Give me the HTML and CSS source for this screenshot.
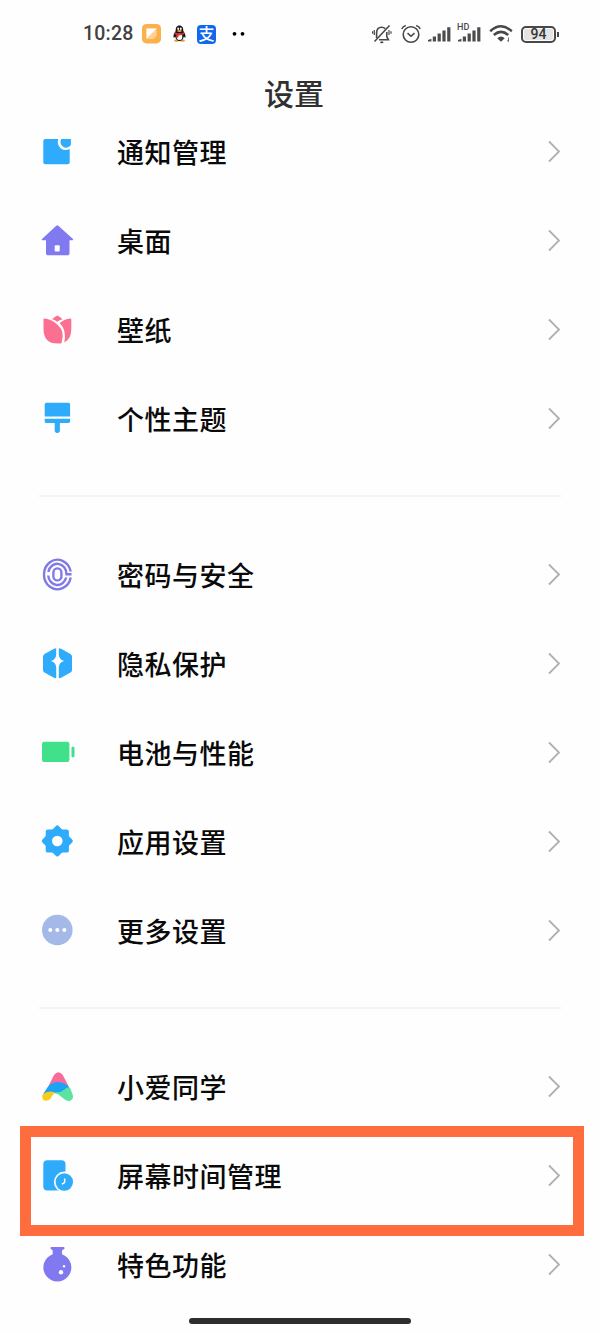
FILE: index.html
```html
<!DOCTYPE html>
<html lang="zh-CN">

<head>
    <meta charset="UTF-8">
    <title>设置</title>
    <link rel="stylesheet" href="styles.css">
</head>

<body>
    <svg width="0" height="0" class="defs">
        <symbol id="chevron" viewBox="0 0 14 23">
            <path d="M2 1.5 L12 11.5 L2 21.5" fill="none" stroke="#b0b0b0" stroke-width="1.8" />
        </symbol>
        <symbol id="bars" viewBox="0 0 23 20">
            <path d="M0 17.6v-1.6l3.4-1.2v2.8zM4.8 17.6v-5.2h3.2v5.2zM9.6 17.6v-8.2h3.2v8.2zM14.4 17.6V6.5h3.2v11.1zM19.2 17.6V3.2h3.2v14.4z" fill="#4c4c4c" />
        </symbol>
    </svg>

    <header class="status-bar">
        <span class="time">10:28</span>
        <svg class="app-note" width="19" height="20" viewBox="0 0 19 20">
            <rect width="19" height="19.4" rx="4.5" fill="#fbb04c" />
            <path d="M4.5 4.5h10v7.5l-3 3h-7z" fill="#ffd391" />
            <path d="M4.5 4.5h10L4.5 14.5z" fill="#fff" />
        </svg>
        <svg class="app-qq" width="13" height="20" viewBox="0 0 13 20">
            <ellipse cx="3.6" cy="16.6" rx="2.6" ry="1.2" fill="#e8a02c" />
            <ellipse cx="9.4" cy="16.6" rx="2.6" ry="1.2" fill="#e8a02c" />
            <path d="M6.5 1.6C3.6 1.6 2.6 4 2.7 7 1.2 9 0 11.5.6 13.8l1.6-1C2.8 15.5 4.3 17 6.5 17s3.7-1.5 4.3-4.2l1.6 1C13 11.5 11.8 9 10.3 7c.1-3-.9-5.4-3.8-5.4z" fill="#17171a" />
            <ellipse cx="6.5" cy="12.8" rx="2.8" ry="3.2" fill="#fff" />
            <ellipse cx="5.2" cy="4.7" rx=".9" ry="1.2" fill="#fff" />
            <ellipse cx="7.8" cy="4.7" rx=".9" ry="1.2" fill="#fff" />
            <ellipse cx="6.5" cy="7" rx="2.3" ry=".9" fill="#f0a030" />
            <path d="M2.2 8.2q4.3 2.8 8.6 0l.6 1.9q-3 1.5-6 1.4v2H3.5v-2.5l-1.9-.9z" fill="#e02d38" />
        </svg>
        <span class="app-pay">支</span>
        <svg class="more" width="14" height="20" viewBox="0 0 14 20">
            <circle cx="2.5" cy="9.8" r="1.9" />
            <circle cx="10.5" cy="9.8" r="1.9" />
        </svg>

        <div class="system">
            <svg width="20" height="20" viewBox="0 0 20 20" fill="none" stroke="#484848" stroke-width="1.6">
                <path d="M4.6 14V8.5C4.8 5 7 3.2 9.5 3.2c1.5 0 2.8.5 3.7 1.4M14.8 8v4.5l1.6 3.3H7M8.5 17.8q1.3 1.2 2.7 0" />
                <path d="M17.5 1.5L2.5 17.5" />
                <path d="M2.3 6v5M.6 7.3v2.4M17 6v5M19 7.3v2.4" stroke-width="1.2" />
            </svg>
            <svg class="alarm" width="20" height="20" viewBox="0 0 20 20" fill="none" stroke="#484848" stroke-width="1.6">
                <circle cx="10" cy="10.5" r="7.8" />
                <path d="M6.5 9.2L10 12.3l3.5-3.1M.8 5Q2 2.3 4.8 1.5M19.2 5Q18 2.3 15.2 1.5" />
            </svg>
            <svg class="signal" width="23" height="20"><use href="#bars" /></svg>
            <div class="signal hd">
                <svg width="23" height="20"><use href="#bars" /></svg>
                <span>HD</span>
            </div>
            <svg class="wifi" width="24" height="20" viewBox="0 0 24 20" fill="none" stroke="#484848" stroke-width="2.5">
                <path d="M1.2 7.2Q12-2.6 22.8 7.2M4.8 11q7.2-6.2 14.4 0" />
                <path d="M8.3 14.2q3.7-3.2 7.4 0L12 17.8z" fill="#484848" stroke="none" />
                <path d="M19.5 13.5v4M18.3 16.3l1.2 1.5" stroke-width=".8" />
            </svg>
            <span class="battery">94</span>
        </div>
    </header>

    <h1>设置</h1>

    <main>
        <ul class="group">
            <li>
                <svg class="icon" viewBox="0 0 37 37">
                    <rect x="4.3" y="6" width="26.4" height="25.3" rx="2" fill="#2fabfb" />
                    <path d="M19.5 5.5a8 8 0 0 0 12.5 9.5V5.5z" fill="#fefefe" />
                    <path d="M22.3 6h9.6v6a5.3 5.3 0 0 1-9.6-6z" fill="#2fabfb" />
                </svg>
                <span>通知管理</span>
                <svg class="arrow"><use href="#chevron" /></svg>
            </li>
            <li>
                <svg class="icon" viewBox="0 0 37 37">
                    <path d="M17.3 3.8q1-.9 2 0L34 17q.8 1-.5 1.2h-3V31.5q0 1.7-1.7 1.7H8.7Q7 33.2 7 31.5V18.2H3.5Q2 18 3 17z" fill="#8079f0" />
                    <rect x="15.7" y="23.3" width="5" height="6.3" rx="1" fill="#fff" />
                </svg>
                <span>桌面</span>
                <svg class="arrow"><use href="#chevron" /></svg>
            </li>
            <li>
                <svg class="icon" viewBox="0 0 37 37" fill="#fb6f90">
                    <path d="M18.3 4.5Q21.5 6 23.5 8.2Q20.5 9 18.3 10.8Q16 9 13.3 8.2Q15 6 18.3 4.5z" />
                    <path d="M4.5 8.3q0-1 1-.9Q12 8.3 15.5 11.2Q24 17 23.7 25L22.5 32.3Q4.5 34.5 4.5 18z" />
                    <path d="M32.3 8.3q0-1-1-.9Q25 8.3 20.6 12Q28 19 25.3 31.5Q32.3 28 32.3 18z" />
                </svg>
                <span>壁纸</span>
                <svg class="arrow"><use href="#chevron" /></svg>
            </li>
            <li>
                <svg class="icon" viewBox="0 0 37 37" fill="#2fabfb">
                    <path d="M7.5 2.8h22q1.6 0 1.6 1.8v11.9H5.7V4.6Q5.7 2.8 7.5 2.8z" />
                    <path d="M5.7 18.7h25.4v2.5q0 1.9-1.9 1.9H20.9V30.3a2.6 2.6 0 0 1-5.2 0V23.1H7.6Q5.7 23.1 5.7 21.2z" />
                </svg>
                <span>个性主题</span>
                <svg class="arrow"><use href="#chevron" /></svg>
            </li>
        </ul>

        <hr>

        <ul class="group">
            <li>
                <svg class="icon" viewBox="0 0 37 37" fill="none" stroke="#8079e6" stroke-width="2.4">
                    <path d="M31.7 15.500A13.500 14.800 0 1 0 31.700 21.500" />
                    <path d="M9.300 16A9.200 10.400 0 0 1 27.500 18.300H32.500M27.200 21.500A9.200 10.400 0 0 1 9.200 19.500" />
                    <rect x="14.400" y="12.400" width="8" height="12" rx="4" />
                </svg>
                <span>密码与安全</span>
                <svg class="arrow"><use href="#chevron" /></svg>
            </li>
            <li>
                <svg class="icon" viewBox="0 0 37 37" fill="#2fabfb">
                    <path d="M17.2 3.2V10Q16.5 15.2 11.8 16Q16.5 16.8 17.2 22V33.3Q15.8 33.3 14.5 32.5L5.5 27.5Q4 26.5 4 25V11.5Q4 10 5.5 9L14.5 4Q15.8 3.2 17.2 3.2z" />
                    <path d="M19.8 3.2V10Q20.5 15.2 25.2 16Q20.5 16.8 19.8 22V33.3Q21.2 33.3 22.5 32.5L31.5 27.5Q33 26.5 33 25V11.5Q33 10 31.5 9L22.5 4Q21.2 3.2 19.8 3.2z" />
                </svg>
                <span>隐私保护</span>
                <svg class="arrow"><use href="#chevron" /></svg>
            </li>
            <li>
                <svg class="icon" viewBox="0 0 37 37" fill="#41e18b">
                    <rect x="3" y="7.7" width="27.4" height="20.3" rx="2" />
                    <rect x="32.5" y="12.7" width="3" height="10.6" rx="1" />
                </svg>
                <span>电池与性能</span>
                <svg class="arrow"><use href="#chevron" /></svg>
            </li>
            <li>
                <svg class="icon" viewBox="0 0 37 37" fill="#2fabfb">
                    <rect x="6.7" y="6.4" width="23.2" height="23.2" rx="2.2" />
                    <rect x="6.7" y="6.4" width="23.2" height="23.2" rx="2.2" transform="rotate(45 18.3 18)" />
                    <circle cx="18.3" cy="18" r="5.3" fill="#fff" />
                </svg>
                <span>应用设置</span>
                <svg class="arrow"><use href="#chevron" /></svg>
            </li>
            <li>
                <svg class="icon" viewBox="0 0 37 37" fill="#fff">
                    <circle cx="18.3" cy="18" r="15.3" fill="#a5b9e8" />
                    <circle cx="11.3" cy="18" r="2" />
                    <circle cx="18.3" cy="18" r="2" />
                    <circle cx="25.3" cy="18" r="2" />
                </svg>
                <span>更多设置</span>
                <svg class="arrow"><use href="#chevron" /></svg>
            </li>
        </ul>

        <hr>

        <ul class="group">
            <li>
                <svg class="icon" viewBox="0 0 37 37">
                    <path d="M9.5 18L15 7Q19.3 1.5 23.8 7L30 19z" fill="#f9699c" />
                    <path d="M4 26.5L9 18.5Q13 14 19.5 14Q28 14.5 31.5 21.5L30 28.5L15.5 25z" fill="#1ba3f5" />
                    <path d="M3.8 26.5Q8.5 22.3 15.8 24.2L11.5 30.5Q8.5 34 5 32.3Q2.3 30.2 3.8 26.5z" fill="#f9cb1b" />
                    <path d="M15.8 24.2Q22 24.8 25.5 21.5Q28.5 18.3 30.8 19.5L33.3 25.5Q35.5 31 31 32.7Q27.5 33.7 23.5 29.8Q19.5 25.8 15.8 24.2z" fill="#5be3a1" />
                </svg>
                <span>小爱同学</span>
                <svg class="arrow"><use href="#chevron" /></svg>
            </li>
            <li class="marked">
                <svg class="icon" viewBox="0 0 37 37">
                    <rect x="4.3" y="3.2" width="22.2" height="30.2" rx="4" fill="#2fabfb" />
                    <circle cx="25.3" cy="25" r="10.4" fill="#fff" />
                    <circle cx="25.3" cy="25" r="8.7" fill="#2fabfb" />
                    <path d="M25.7 21.5V24.5Q25.5 26.5 22.8 27" fill="none" stroke="#fff" stroke-width="1.5" />
                </svg>
                <span>屏幕时间管理</span>
                <svg class="arrow"><use href="#chevron" /></svg>
            </li>
            <li>
                <svg class="icon" viewBox="0 0 37 37">
                    <path d="M12.5.9H24.5q1 0 1 1.2T24.5 3.4Q23 3.6 23 5V8.2A14 14 0 1 1 13.7 8.2V5Q13.7 3.6 12.5 3.4 11.5 3.2 11.5 2.1T12.5.9z" fill="#8079f0" />
                    <circle cx="22" cy="26.3" r="2.2" fill="#fff" />
                    <circle cx="25" cy="20.3" r="1.2" fill="#fff" />
                </svg>
                <span>特色功能</span>
                <svg class="arrow"><use href="#chevron" /></svg>
            </li>
        </ul>
    </main>

    <div class="home-bar"></div>
</body>

</html>
```
FILE: styles.css
```css
*,
*::after {
    box-sizing: border-box;
}

body {
    margin: 0;
    height: 1333px;
    overflow: hidden;
    background: #fefefe;
    color: #0a0a0a;
    font-family: "Noto Sans CJK SC", sans-serif;
}

svg {
    display: block;
    flex: none;
}

.defs {
    display: none;
}

/* status bar */
.status-bar {
    display: flex;
    align-items: center;
    height: 68px;
    padding: 0 40px 0 83px;
}

.time {
    width: 50px;
    color: #414141;
    font: 500 19.5px/20px Roboto, sans-serif;
    letter-spacing: 0.2px;
}

.app-note {
    margin-left: 9px;
}

.app-qq {
    margin-left: 12px;
}

.app-pay {
    width: 19px;
    height: 19px;
    margin-left: 11px;
    border-radius: 4px;
    background: #1268ec;
    color: #fff;
    font-size: 16px;
    font-weight: 500;
    line-height: 17px;
    text-align: center;
}

.more {
    margin-left: 16px;
}

.system {
    display: flex;
    align-items: center;
    margin-left: auto;
}

.alarm {
    margin-left: 9px;
}

.signal {
    margin-left: 7px;
}

.hd {
    position: relative;
}

.hd span {
    position: absolute;
    top: -1px;
    left: -1px;
    padding-right: 1px;
    background: #fefefe;
    color: #484848;
    font: 500 9px/9px Roboto, sans-serif;
}

.wifi {
    margin-left: 8px;
}

.battery {
    position: relative;
    width: 35px;
    height: 17px;
    margin-left: 8px;
    margin-right: 4px;
    border: 2px solid #484848;
    border-radius: 5px;
    background: #e4e4e4;
    box-shadow: inset 0 0 0 1px #fefefe;
    color: #333;
    font: 500 14px/13px Roboto, sans-serif;
    text-align: center;
}

.battery::after {
    content: "";
    position: absolute;
    top: 4px;
    right: -5px;
    width: 2px;
    height: 5px;
    background: #484848;
}

h1 {
    height: 39px;
    margin: 0;
    padding-right: 12px;
    color: #303030;
    font-size: 30px;
    font-weight: 500;
    line-height: 48px;
    text-align: center;
}

/* settings list */
.group {
    margin: 0;
    padding: 0;
    list-style: none;
}

.group li {
    position: relative;
    display: flex;
    align-items: center;
    height: 89px;
    padding: 0 39px;
    font-size: 27px;
    font-weight: 500;
    letter-spacing: 0.5px;
}

.icon {
    width: 37px;
    height: 37px;
    margin-right: 41px;
}

.arrow {
    width: 14px;
    height: 23px;
    margin-left: auto;
}

hr {
    height: 2px;
    margin: 32px 39px 33px;
    border: 0;
    background: #f3f3f3;
}

/* highlight frame around one row */
.marked::after {
    content: "";
    position: absolute;
    top: -5px;
    left: 20px;
    right: 16px;
    height: 110px;
    border: 11px solid #ff6c3e;
}

.home-bar {
    width: 222px;
    height: 6px;
    margin: 9px 0 0 189px;
    border-radius: 3px;
    background: #2d2d2d;
}
```
